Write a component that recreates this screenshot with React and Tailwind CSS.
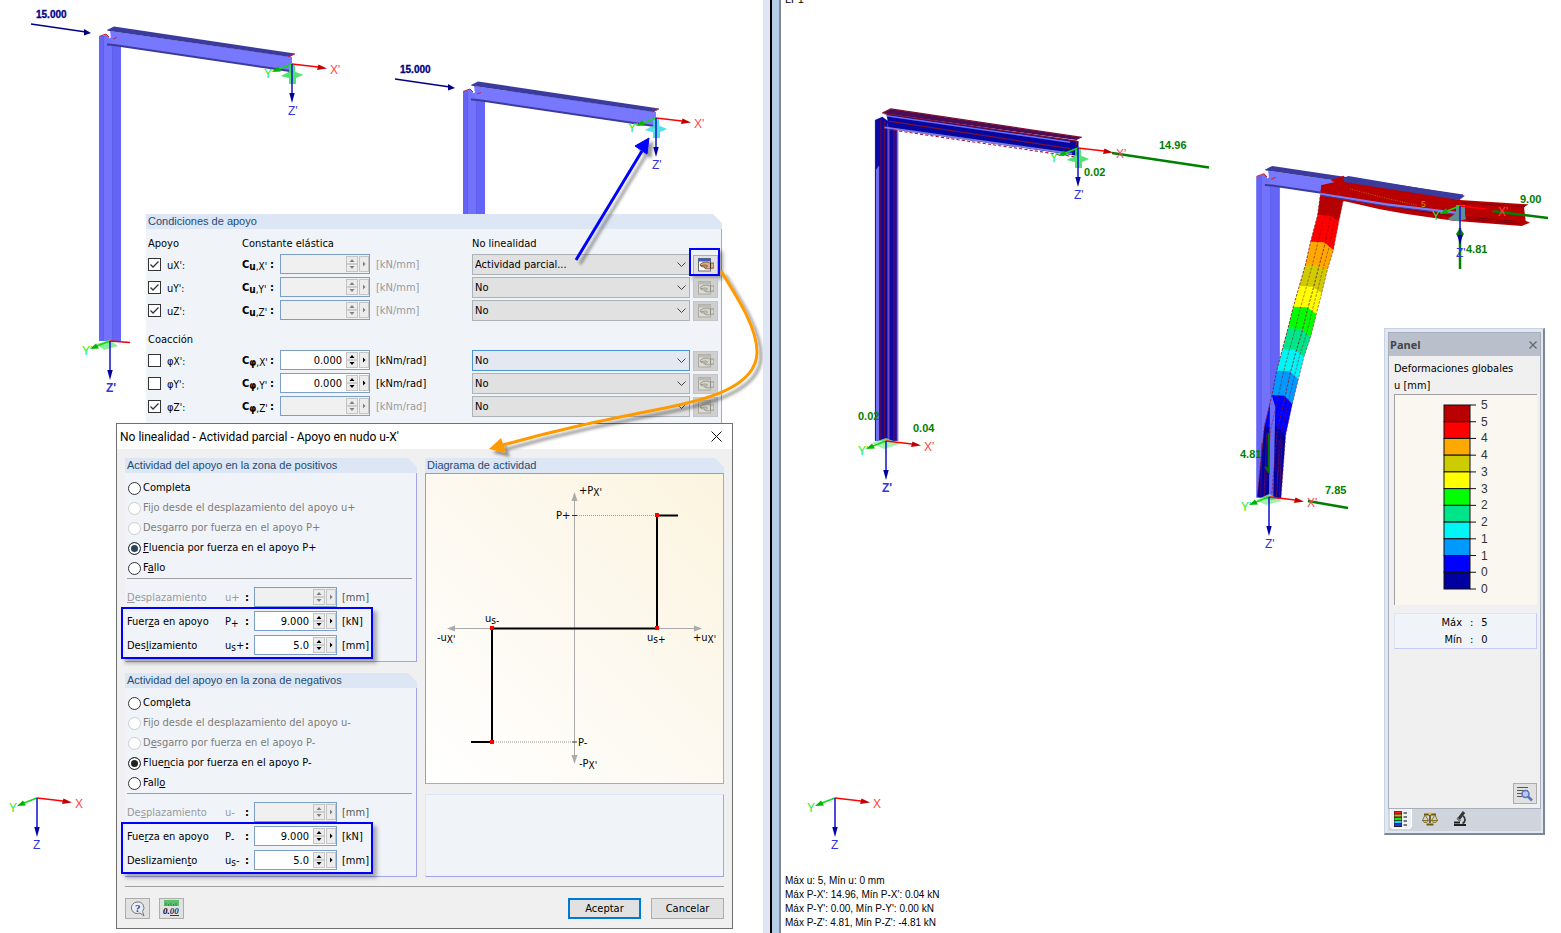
import React from 'react';
import { clsx } from 'clsx';

const NAVY = '#000080';

const supportRows = [
  { id: 'ux', sym: 'u', axis: "X'", checked: true, unit: '[kN/mm]', value: '', option: 'Actividad parcial...' },
  { id: 'uy', sym: 'u', axis: "Y'", checked: true, unit: '[kN/mm]', value: '', option: 'No' },
  { id: 'uz', sym: 'u', axis: "Z'", checked: true, unit: '[kN/mm]', value: '', option: 'No' },
];

const restraintRows = [
  { id: 'phix', sym: 'φ', axis: "X'", checked: false, unit: '[kNm/rad]', value: '0.000', option: 'No', hot: true },
  { id: 'phiy', sym: 'φ', axis: "Y'", checked: false, unit: '[kNm/rad]', value: '0.000', option: 'No' },
  { id: 'phiz', sym: 'φ', axis: "Z'", checked: true, unit: '[kNm/rad]', value: '', option: 'No' },
];

const zones = [
  {
    id: 'pos',
    title: 'Actividad del apoyo en la zona de positivos',
    sign: '+',
    options: ['Completa', 'Fijo desde el desplazamiento del apoyo u+', 'Des&garro por fuerza en el apoyo P+', '&Fluencia por fuerza en el apoyo P+', 'F&allo'],
    labels: ['&Desplazamiento', 'Fuer&za en apoyo', 'Des&lizamiento'],
    dot: 'checked:bg-[#24465f]',
  },
  {
    id: 'neg',
    title: 'Actividad del apoyo en la zona de negativos',
    sign: '-',
    options: ['Com&pleta', 'Fijo desde el desplazamiento del apoyo u-', 'D&esgarro por fuerza en el apoyo P-', 'Flue&ncia por fuerza en el apoyo P-', 'Fall&o'],
    labels: ['De&splazamiento', 'Fue&rza en apoyo', 'Deslizamien&to'],
    dot: 'checked:bg-[#222222]',
  },
];

const legend = [
  ['#b80000', '5'], ['#ff0000', '5'], ['#ffa800', '4'], ['#cccc00', '4'], ['#ffff00', '3'], ['#00ff00', '3'],
  ['#00e58a', '2'], ['#00f5f5', '2'], ['#0099ff', '1'], ['#0000ff', '1'], ['#0000a0', '0'],
];

// "&" marks the access key letter
function Mnemonic({ text }) {
  const i = text.indexOf('&');
  if (i < 0) return text;
  return <>{text.slice(0, i)}<u>{text[i + 1]}</u>{text.slice(i + 2)}</>;
}

function GroupTitle({ children }) {
  return (
    <h3 className="h-[15px] bg-[#dce6f4] pl-0.5 font-['Liberation_Sans',Arial,sans-serif] text-[11px] leading-[15px] text-[#1f4a73] [clip-path:polygon(0_0,calc(100%-9px)_0,100%_9px,100%_100%,0_100%)]">
      {children}
    </h3>
  );
}

function NumberField({ id, value, disabled, className }) {
  const ink = disabled ? '#808080' : '#000';
  return (
    <div className={clsx('flex h-5 items-stretch border border-[#7b9fc8]', disabled ? 'bg-[#f0f0f0]' : 'bg-white', className)}>
      <input id={id} type="text" defaultValue={value} disabled={disabled} className="min-w-0 flex-1 bg-transparent pr-1 pt-px text-right outline-none" />
      <button type="button" disabled={disabled} aria-label="Cambiar valor" className="my-px w-3 border border-[#c4c4c4] bg-[#ececec]">
        <svg width="10" height="14" viewBox="0 0 10 14">
          <path d="M5 2 L7.500 5 H2.500Z M5 12 L7.500 9 H2.500Z" fill={ink} />
          <path d="M0 7H10" stroke="#b0b0b0" />
        </svg>
      </button>
      <button type="button" disabled={disabled} aria-label="Más opciones" className="my-px ml-px w-[10px] border border-[#c4c4c4] bg-[#ececec]">
        <svg width="8" height="14" viewBox="0 0 8 14">
          <path d="M3 4.500 L5.500 7 L3 9.500Z" fill={ink} />
        </svg>
      </button>
    </div>
  );
}

function HandIcon({ active }) {
  return (
    <svg width="16" height="14" viewBox="0 0 16 14">
      <rect x="0.500" y="0.500" width="12" height="12.500" fill={active ? '#fff' : '#dcdcd6'} stroke={active ? '#666' : '#aaa9a0'} />
      <rect x="0.500" y="0.500" width="12" height="3" fill={active ? '#3a5fc4' : '#bcbcb4'} />
      <path d="M2 6.500 L5 4.500 L9 4 L12 5 L16 5 L16 10 L12.500 10.500 L10 11 L7 10.500 L6 9 L3 8.500Z" fill={active ? '#e2ab80' : '#d4d4ca'} stroke={active ? '#6b4a3a' : '#8f8f86'} strokeWidth="0.800" />
      <path d="M3 7.500 L8 7 L10 8.500 M6 9 L9 9" stroke={active ? '#6b4a3a' : '#8f8f86'} strokeWidth="0.800" fill="none" />
      <path d="M12.500 5 V10.500" stroke={active ? '#333' : '#8f8f86'} />
    </svg>
  );
}

function SupportRow({ row }) {
  const active = row.id === 'ux';
  return (
    <div className="flex h-[23px] items-start">
      <label className="flex h-5 w-[94px] items-center gap-1.5">
        <span className="relative size-[13px]">
          <input type="checkbox" defaultChecked={row.checked} className="peer block size-[13px] appearance-none border border-[#333] bg-white" />
          <svg className="pointer-events-none absolute left-0 top-0 hidden peer-checked:block" width="13" height="13" viewBox="0 0 13 13">
            <path d="M2.500 6.500 L5 9 L10.500 3.500" fill="none" stroke="#333" strokeWidth="1.300" />
          </svg>
        </span>
        <span className="pt-1">{row.sym}<span className="text-[10px]">{row.axis}:</span></span>
      </label>
      <label htmlFor={row.id} className="flex h-5 w-[38px] items-center justify-between pr-1.5 pt-px">
        <span><b>C</b><span className="relative top-0.5 text-[10px]"><b>{row.sym}</b>,{row.axis}</span></span>
        <b>:</b>
      </label>
      <NumberField id={row.id} value={row.value} disabled={!row.value} className="w-[90px]" />
      <span className={clsx('ml-1.5 w-24 pt-px leading-5', !row.value && 'text-[#9a9a9a]')}>{row.unit}</span>
      <div className="relative w-[218px]">
        <select
          aria-label={`No linealidad ${row.sym}${row.axis}`}
          className={clsx('block h-[21px] w-full appearance-none border pl-0.5 outline-none', row.hot ? 'border-[#4a93cf] bg-[#e3e8f1]' : 'border-[#adb2b5] bg-[#e1e1e1]')}
        >
          <option>{row.option}</option>
        </select>
        <svg className="pointer-events-none absolute right-1 top-2" width="9" height="6" viewBox="0 0 9 6">
          <path d="M0.500 0.500 L4.500 4.500 L8.500 0.500" fill="none" stroke="#444" />
        </svg>
      </div>
      <div className="relative ml-[3px]">
        <button type="button" aria-label="Editar no linealidad" disabled={!active} className={clsx('mt-px flex h-5 w-[25px] items-center justify-center border', active ? 'border-[#adadad] bg-[#e1e1e1]' : 'border-[#c4c4c4] bg-[#cfcfcf]')}>
          <HandIcon active={active} />
        </button>
        {active && <div className="pointer-events-none absolute -left-1 -top-1.5 h-7 w-[31px] border-2 border-[#0000ff] shadow-[3px_3px_4px_rgba(0,0,0,0.35)]" />}
      </div>
    </div>
  );
}

function SupportPanel() {
  return (
    <section className="absolute left-[146px] top-[214px] w-[576px]">
      <GroupTitle>Condiciones de apoyo</GroupTitle>
      <div className="h-52 border-r border-[#a3a3ee] bg-[#f0f4f9] pl-0.5">
        <div className="flex h-[25px] pt-[5px] leading-5">
          <span className="w-[94px]">Apoyo</span>
          <span className="w-[230px]">Constante elástica</span>
          <span>No linealidad</span>
        </div>
        {supportRows.map(row => <SupportRow key={row.id} row={row} />)}
        <div className="h-[27px] pt-[7px] leading-5">Coacción</div>
        {restraintRows.map(row => <SupportRow key={row.id} row={row} />)}
      </div>
    </section>
  );
}

function ValueRow({ id, label, symbol, value, unit, disabled, raised }) {
  return (
    <div className="flex h-5 items-center">
      <label htmlFor={id} className={clsx('w-[98px] pt-px', disabled && 'text-[#9a9a9a]')}><Mnemonic text={label} /></label>
      <span className={clsx('w-5 pt-px', disabled && 'text-[#9a9a9a]')}>{symbol}</span>
      <b className="w-[9px] pt-px">:</b>
      <NumberField id={id} value={value} disabled={disabled} className="w-[83px]" />
      <span className={clsx('ml-[5px] pt-px', raised && 'text-[#555]')}>{unit}</span>
    </div>
  );
}

function ZoneGroup({ zone }) {
  const [desp, fuerza, desl] = zone.labels;
  return (
    <section>
      <GroupTitle>{zone.title}</GroupTitle>
      <div className="border-b border-r border-[#a3a3ee] bg-[#f0f4f9] pb-1.5 pl-0.5 pt-[5px]">
        {zone.options.map((text, i) => {
          const disabled = i === 1 || i === 2;
          return (
            <label key={text} className={clsx('flex h-5 items-center gap-0.5 pl-px', disabled && 'text-[#7c7c7c]')}>
              <input
                type="radio"
                name={zone.id}
                defaultChecked={i === 3}
                disabled={disabled}
                className={clsx('size-[13px] appearance-none rounded-full border bg-white checked:shadow-[inset_0_0_0_2px_white]', disabled ? 'border-[#cccccc]' : 'border-[#333]', zone.dot)}
              />
              <span><Mnemonic text={text} /></span>
            </label>
          );
        })}
        <hr className="mr-1 border-[#a0a0a0]" />
        <div className="mt-[7px] flex flex-col gap-1 pt-px">
          <ValueRow id={`${zone.id}-u`} label={desp} symbol={`u${zone.sign}`} value="" unit="[mm]" disabled raised />
          <div className="relative flex flex-col gap-1">
            <ValueRow id={`${zone.id}-p`} label={fuerza} symbol={<>P<span className="relative top-0.5 text-[10px]">{zone.sign}</span></>} value="9.000" unit="[kN]" />
            <ValueRow id={`${zone.id}-us`} label={desl} symbol={<>u<span className="relative top-0.5 text-[10px]">s</span>{zone.sign}</>} value="5.0" unit="[mm]" />
            <div className="pointer-events-none absolute -bottom-1 -left-1.5 -top-1 w-[252px] border-2 border-[#0000ff] shadow-[4px_4px_4px_rgba(0,0,0,0.3)]" />
          </div>
        </div>
      </div>
    </section>
  );
}

function Sub({ children, small = 10 }) {
  return <tspan dy="2" fontSize={small}>{children}</tspan>;
}

function ActivityDiagram() {
  return (
    <svg className="block h-[309px] w-full" viewBox="426 474 297 309">
      <defs>
        <linearGradient id="paper" x1="0" y1="1" x2="1" y2="0">
          <stop offset="0" stopColor="#ffffff" />
          <stop offset="0.500" stopColor="#fdf9f0" />
          <stop offset="1" stopColor="#fbf4de" />
        </linearGradient>
      </defs>
      <rect x="420" y="474" width="310" height="309" fill="url(#paper)" />
      <path d="M574.500 497V759M452 628.500H697" stroke="#aaaaaa" />
      <path d="M574.500 492L577.500 501H571.500Z M574.500 764L577.500 755H571.500Z M447 628.500L455 625.500V631.500Z M702 628.500L694 625.500V631.500Z" fill="#aaaaaa" />
      <path d="M577 515.500H655M494 742H572" stroke="#999" strokeDasharray="1 1" />
      <path d="M572 515.500H577M572 742H577" stroke="#333" />
      <path d="M678 515.500H657V628.500H492V742H471" fill="none" stroke="#000" strokeWidth="2" />
      <g fill="#ff0000">
        <rect x="655" y="513" width="4" height="4" />
        <rect x="655" y="626" width="4" height="4" />
        <rect x="490" y="626" width="4" height="4" />
        <rect x="490" y="740" width="4" height="4" />
      </g>
      <g fontSize="11">
        <text x="579" y="494">+P<Sub>X'</Sub></text>
        <text x="556" y="519">P+</text>
        <text x="578" y="746">P-</text>
        <text x="579" y="767">-P<Sub>X'</Sub></text>
        <text x="485" y="622">u<Sub>s-</Sub></text>
        <text x="437" y="641">-u<Sub>X'</Sub></text>
        <text x="647" y="641">u<Sub>s+</Sub></text>
        <text x="693" y="641">+u<Sub>X'</Sub></text>
      </g>
    </svg>
  );
}

function Dialog() {
  return (
    <section role="dialog" aria-label="No linealidad" className="absolute left-[116px] top-[423px] w-[617px] border border-[#707070] bg-[#f0f0f0]">
      <header className="flex h-[25px] items-center justify-between bg-white pl-[3px] pr-2.5">
        <h2 className="font-['Roboto','Open_Sans',sans-serif] text-[12px]">No linealidad - Actividad parcial - Apoyo en nudo u-X'</h2>
        <button type="button" aria-label="Cerrar">
          <svg width="11" height="11" viewBox="0 0 11 11"><path d="M0.500 0.500L10.500 10.500M10.500 0.500L0.500 10.500" stroke="#111" /></svg>
        </button>
      </header>
      <div className="flex gap-2 px-2 pt-[9px]">
        <div className="flex w-[292px] flex-col gap-[11px]">
          {zones.map(zone => <ZoneGroup key={zone.id} zone={zone} />)}
        </div>
        <div className="flex flex-1 flex-col gap-2.5">
          <section>
            <GroupTitle>Diagrama de actividad</GroupTitle>
            <div className="border border-b-[#a3a3ee] border-l-[#a0a0a0] border-r-[#a3a3ee] border-t-[#a0a0a0]">
              <ActivityDiagram />
            </div>
          </section>
          <div className="flex-1 border border-b-[#a3a3ee] border-l-[#dce6f4] border-r-[#a3a3ee] border-t-[#dce6f4] bg-[#f0f4f9]" />
        </div>
      </div>
      <footer className="mx-2 mt-[9px] flex items-center border-t border-[#a0a0a0] pb-[9px] pt-[11px]">
        <button type="button" aria-label="Ayuda" className="flex h-[21px] w-[25px] items-center justify-center border border-[#adadad] bg-[#e1e1e1]">
          <svg width="16" height="16" viewBox="0 0 16 16">
            <path d="M7 1a6 5.800 0 1 0 3 11l4 3-1.500-4.500A6 5.800 0 0 0 7 1Z" fill="#e8ecf6" stroke="#777" />
            <text x="5" y="11" fontSize="11" fontWeight="bold" fill="#2b4596" fontFamily="Liberation Serif, serif">?</text>
          </svg>
        </button>
        <button type="button" aria-label="Unidades" className="ml-[9px] flex h-[21px] w-[25px] items-center justify-center border border-[#adadad] bg-[#e1e1e1]">
          <svg width="17" height="17" viewBox="0 0 17 17">
            <rect x="1" y="0" width="15" height="6" fill="#5cc06a" />
            <path d="M3 3V6M5.500 4V6M8 3V6M10.500 4V6M13 3V6" stroke="#2d8a3c" />
            <text x="0" y="14" fontSize="9" fontWeight="bold" fontStyle="italic" fontFamily="Liberation Serif, serif">0.<tspan fill="#223a78">00</tspan></text>
            <path d="M7 15.500H16" stroke="#223a78" />
          </svg>
        </button>
        <button type="button" className="ml-auto h-[21px] w-[73px] border-2 border-[#0078d7] bg-[#e1e1e1]">Aceptar</button>
        <button type="button" className="ml-2.5 h-[21px] w-[73px] border border-[#adadad] bg-[#e1e1e1]">Cancelar</button>
      </footer>
    </section>
  );
}

function Axis({ x, y, prime = "'", bold, noX }) {
  return (
    <g transform={`translate(${x} ${y})`} fontSize="12" fontFamily="Liberation Sans, Arial, sans-serif">
      {noX ? <path d="M0 0L20 1.500" stroke="#ee0000" strokeWidth="1.500" /> : (
        <>
          <path d="M0 0L26 3" stroke="#ff0000" strokeWidth="1.500" />
          <path d="M35 4.500L25 6L26.500 0.500Z" fill="#c00000" />
          <text x="38" y="10" fill="#ff4444">X{prime}</text>
        </>
      )}
      <path d="M0 0L-13 5" stroke="#11dd11" strokeWidth="1.800" />
      <path d="M-20 8L-14 2.500L-11 7.500Z" fill="#00b400" />
      <text x="-28" y="14" fill="#22ee22">Y{prime}</text>
      <path d="M0 0V30" stroke="#1010d0" strokeWidth="1.500" />
      <path d="M0 39L-2.700 29H2.700Z" fill="#0000a0" />
      <text x="-4" y="51" fill="#3333dd" fontWeight={bold ? 'bold' : 'normal'}>Z{prime}</text>
    </g>
  );
}

function Support({ x, y, fill }) {
  return (
    <g transform={`translate(${x} ${y})`} fill={fill} opacity="0.850">
      <path d="M-11 12L-3 8V1H3V8L11 11L4 14V20H-3V14Z" />
      <path d="M-11 12L0 6L11 11L0 15Z" opacity="0.600" />
    </g>
  );
}

function Frame({ transform, bottom = 341 }) {
  return (
    <g transform={transform}>
      <path d={`M99 37L106 34L121 45V${bottom}H99Z`} fill="#7272fb" />
      <path d={`M99 37L103 35V${bottom}H99Z M113 40L121 44V${bottom}H113Z`} fill="#6464f6" />
      <path d={`M103.500 36V${bottom}M112.500 42V${bottom}`} stroke="#5a5ae8" strokeWidth="0.800" />
      <path d="M110 31L292 57V71L112 45Z" fill="#7878ff" />
      <path d="M106 30.500L114 26.500L295 53.500L290 57Z" fill="#3b3b9e" />
      <path d="M107 44.500L114 45L290 71" fill="none" stroke="#3b3b9e" strokeWidth="2" />
      <path d="M106 29.500L110 38" stroke="#fff" strokeWidth="1.500" />
      <path d="M99 36.500L106 34L109 37M113 39L117 37.500M288 57L295 54M288 72H292" fill="none" stroke="#d02040" />
    </g>
  );
}

function LoadArrow({ x, y }) {
  return (
    <g transform={`translate(${x} ${y})`}>
      <path d="M0 0L55 8" stroke={NAVY} strokeWidth="1.500" />
      <path d="M60 9L53 5V11.500Z" fill={NAVY} />
      <text x="5" y="-6" fontSize="10" fontWeight="bold" fill={NAVY} stroke={NAVY} strokeWidth="0.300" fontFamily="Liberation Sans, Arial, sans-serif">15.000</text>
    </g>
  );
}

function ModelScene() {
  return (
    <svg className="absolute left-0 top-0" width="763" height="933" viewBox="0 0 763 933">
      <Frame />
      <Frame transform="translate(364 55)" bottom={170} />
      <LoadArrow x={31} y={24} />
      <LoadArrow x={395} y={79} />
      <Support x={292} y={64} fill="#33e05a" />
      <Support x={656} y={118} fill="#33dde6" />
      <path d="M96 344L110 340L118 346L104 350Z" fill="#8cf09a" />
      <Axis x={292} y={64} />
      <Axis x={656} y={118} />
      <Axis x={110} y={341} noX bold />
      <Axis x={37} y={798} prime="" />
    </svg>
  );
}

// left and right ends of the colour bands on the deformed column
const bands = [
  [305, 105, 370, 150], [293, 195, 357, 212], [272, 275, 340, 300], [256, 345, 322, 360], [238, 408, 305, 430], [220, 470, 289, 492],
  [204, 535, 272, 560], [187, 598, 252, 620], [170, 662, 235, 688], [156, 735, 217, 762], [133, 830, 197, 855], [112, 1040, 183, 1045],
];

function bandLine(t) {
  return bands.map(([a, b, c, d]) => `${a + (c - a) * t},${b + (d - b) * t}`).join(' ');
}

function DeformedFrame() {
  return (
    <>
      <Frame transform="translate(1152 138) scale(1.055)" />
      <g transform="translate(1220 150) scale(0.33333)">
        <path d="M340 92L372 80L480 105L720 150L925 163L912 172L917 212L930 218L905 228L700 212L560 192L480 178L368 152Z" fill="#b80000" />
        <path d="M725 158L915 170M480 165L700 198L910 216M720 205L905 222" fill="none" stroke="#7d0010" strokeWidth="3" />
        <path d="M305 105L345 96L372 110L370 155L305 130Z" fill="#b80000" />
        {legend.map(([color], i) => {
          const [a, b, c, d] = bands[i];
          const [e, f, g, h] = bands[i + 1];
          return <path key={color} d={`M${a} ${b}L${a + (c - a) * 0.6} ${b + 2}L${c} ${d}L${g} ${h}L${e + (g - e) * 0.6} ${f + 10}L${e} ${f}Z`} fill={color} />;
        })}
        <path d="M155 735L166 770L160 1040H147L150 735Z" fill="#6d6df5" />
        <path d="M140 850L132 1040M126 880L122 1040M178 870L170 1040M186 870L178 1040" stroke="#5a0a6a" strokeWidth="2.500" />
        {[0, 0.3, 0.6, 0.8, 1].map(t => (
          <polyline key={t} points={bandLine(t)} fill="none" stroke="#8a1020" strokeOpacity="0.800" strokeWidth={t === 0 || t === 0.6 ? 3 : 2} strokeDasharray="8 4" />
        ))}
        <path d="M370 84L385 78L735 137L718 150L372 96Z" fill="#3b3b9e" />
        <path d="M300 128L500 160L718 186L716 194L500 168L300 135Z" fill="#7d7df5" />
        <path d="M302 136L500 168L716 194" fill="none" stroke="#3b3b9e" strokeWidth="3" />
        <path d="M335 92L372 80M345 100V92" stroke="#c00000" strokeWidth="6" />
        <path d="M390 117L500 145L590 166" fill="none" stroke="#b5a000" strokeWidth="2" strokeDasharray="3 4" />
        <text x="603" y="170" fontSize="26" fill="#b5a000" fontFamily="Liberation Sans, Arial, sans-serif">5</text>
        <path d="M682 208L708 190V165H735V192L738 208L712 214Z" fill="#5f8f96" />
        <path d="M146 850V965L136 950" fill="none" stroke="#007000" strokeWidth="6" />
      </g>
    </>
  );
}

function ResultScene() {
  return (
    <svg className="absolute left-0 top-0" width="780" height="933" viewBox="781 0 780 933">
      <g transform="translate(770.500 81) scale(1.055)">
        <path d="M99 37L106 34L121 45V341H99Z" fill="#0a0aa8" />
        <path d="M100 84L103 80V341H100Z M111 40H113V341H111Z M119.500 46H121V341H119.500Z" fill="#6e6ef2" />
        <path d="M99.500 37V341M104.500 36V341M108 38V341M112.500 40V341M116.500 42V341" stroke="#6a0838" strokeWidth="0.900" />
        <path d="M117 44H119.500V341H117Z" fill="#3a0a80" />
        <path d="M110 31L292 57V71L112 45Z" fill="#0606a0" />
        <path d="M110 33L284 58" stroke="#6e6ef2" strokeWidth="1.500" />
        <path d="M108 44L286 69" stroke="#7a7ae0" strokeWidth="1.800" />
        <path d="M106 30.500L114 26.500L295 53.500L290 56Z" fill="#4a0c58" />
        <path d="M106 30.500L114 26.500L295 53.500M108 31L290 57V61M112 38L284 64" fill="none" stroke="#7d1030" strokeWidth="1.200" />
        <path d="M112 46L290 72" stroke="#a01040" strokeDasharray="3 2" />
      </g>
      <DeformedFrame />
      <Support x={1078} y={148} fill="#33e05a" />
      <path d="M872 443L886 438L900 444L884 449Z M1256 500L1269 494L1282 501L1266 505Z" fill="#8cf09a" opacity="0.800" />
      <g stroke="#008000" strokeWidth="2.500">
        <path d="M1112 153L1209 167.500M1492 211L1548 218M1460 228V269M1308 501L1348 508" />
      </g>
      <path d="M1460 228L1464 234L1460 240L1456 234Z" fill="#008000" />
      <Axis x={1078} y={148} />
      <Axis x={886} y={441} bold />
      <Axis x={1460} y={206} />
      <Axis x={1269} y={497} />
      <Axis x={835} y={798} prime="" />
      <g fontSize="11" fontWeight="bold" fill="#008000" fontFamily="Liberation Sans, Arial, sans-serif">
        <text x="1159" y="149">14.96</text>
        <text x="1084" y="176">0.02</text>
        <text x="858" y="420">0.02</text>
        <text x="913" y="432">0.04</text>
        <text x="1240" y="458">4.81</text>
        <text x="1325" y="494">7.85</text>
        <text x="1520" y="203">9.00</text>
        <text x="1466" y="253">4.81</text>
      </g>
    </svg>
  );
}

function Annotations() {
  return (
    <svg className="pointer-events-none absolute left-0 top-0" width="763" height="933" viewBox="0 0 763 933">
      <defs>
        <filter id="soft" x="-20%" y="-20%" width="150%" height="150%">
          <feDropShadow dx="4" dy="4" stdDeviation="1.500" floodColor="#000" floodOpacity="0.400" />
        </filter>
      </defs>
      <g filter="url(#soft)">
        <path d="M576 260L642 151" stroke="#0000ff" strokeWidth="3" />
        <path d="M649 138L635 146L647 154Z" fill="#0000ff" stroke="#0000ff" />
      </g>
      <g filter="url(#soft)">
        <path d="M721 271C738 298 757 328 757 352C757 392 690 403 650 411C600 421 560 429 503 445" fill="none" stroke="#ff9900" strokeWidth="3" />
        <path d="M489 449L501 438L506 453Z" fill="#ff9900" />
      </g>
    </svg>
  );
}

function LegendPanel() {
  const step = 184 / legend.length;
  return (
    <aside className="absolute right-4 top-[328px] w-[161px] border border-b-2 border-r-2 border-[#c8d2e2] border-b-[#7f8794] border-r-[#7f8794] bg-[#dfe7f2] p-[3px] pb-0.5 pr-0.5 font-['DejaVu_Sans_Condensed','DejaVu_Sans',sans-serif]">
      <div className="border border-[#a8aebb] bg-[#f0f0f0]">
        <header className="flex h-[23px] items-center justify-between bg-[#b9bfcb] px-px text-[#444]">
          <h2 className="font-['Open_Sans','Noto_Sans',sans-serif] text-[11px] font-bold">Panel</h2>
          <button type="button" aria-label="Cerrar panel" className="pr-0.5">
            <svg width="8" height="8" viewBox="0 0 8 8"><path d="M0.500 0.500L7.500 7.500M7.500 0.500L0.500 7.500" stroke="#666" strokeWidth="1.200" /></svg>
          </button>
        </header>
        <div className="pb-1 pl-[5px] pr-[3px] pt-1">
          <p className="leading-[17px]">Deformaciones globales</p>
          <p className="leading-[17px]">u [mm]</p>
          <svg className="block w-full border-l border-t border-[#a0a0a0] bg-[#faf7f0]" height="211" viewBox="1395 394 142 210" preserveAspectRatio="xMinYMin meet">
            {legend.map(([color], i) => (
              <rect key={color} x="1444" y={404 + i * step} width="26" height={step} fill={color} stroke="#111" />
            ))}
            {[...legend.map(([, label]) => label), '0'].map((label, i) => (
              <g key={i}>
                <path d={`M1470 ${404 + i * step}H1476`} stroke="#111" />
                <text x="1481" y={408 + i * step} fontSize="12" fill="#333" fontFamily="Liberation Sans, Arial, sans-serif">{label}</text>
              </g>
            ))}
          </svg>
          <dl className="mt-2 grid grid-cols-[67px_auto_1fr] gap-x-2 border border-[#dce6f4] border-b-[#c9c9f5] border-r-[#c9c9f5] bg-[#f0f4f9] text-right leading-[17px]">
            <dt>Máx</dt><dd>:</dd><dd className="text-left">5</dd>
            <dt>Mín</dt><dd>:</dd><dd className="text-left">0</dd>
          </dl>
          <button type="button" aria-label="Buscar" className="ml-auto mt-[134px] flex h-[21px] w-6 items-center justify-center border border-[#adadad] bg-[#e1e1e1]">
            <svg width="18" height="16" viewBox="0 0 18 16">
              <path d="M1 1.500H12M1 4.500H12M1 7.500H6M1 10.500H6" stroke="#555" />
              <circle cx="9.500" cy="8" r="3.500" fill="#b9c8ee" stroke="#5a74b8" strokeWidth="1.500" />
              <path d="M12 10.500L16 14.500" stroke="#5a74b8" strokeWidth="2.500" />
            </svg>
          </button>
        </div>
      </div>
      <nav className="flex h-[22px] items-start bg-[#d0d4dd] pl-0.5">
        <button type="button" aria-label="Escala de colores" className="flex h-5 w-[22px] items-center justify-center rounded-b-sm border border-t-0 border-white bg-[#eef2f4]">
          <svg width="14" height="16" viewBox="0 0 14 16">
            <rect width="8" height="16" fill="#222" />
            <path d="M0.500 1.500H7.500" stroke="#ff2020" strokeWidth="2" />
            <path d="M0.500 4.500H7.500" stroke="#ff9900" strokeWidth="2" />
            <path d="M0.500 8H7.500" stroke="#20e020" strokeWidth="2.500" />
            <path d="M0.500 11H7.500" stroke="#20d0f0" strokeWidth="2" />
            <path d="M0.500 14H7.500" stroke="#2030f0" strokeWidth="2" />
            <path d="M9.500 2H13M9.500 6H13M9.500 10H13M9.500 14H13" stroke="#777" strokeWidth="2" />
          </svg>
        </button>
        <button type="button" aria-label="Factores" className="ml-2 flex h-5 w-5 items-center justify-center">
          <svg width="16" height="16" viewBox="0 0 16 16">
            <path d="M8 2V12M2 3.500H14M4.500 13.500H11.500" stroke="#6b5a1c" strokeWidth="1.800" />
            <path d="M3 4L0.500 9.500H6.500ZM13 4L9.500 9.500H15.500Z" fill="none" stroke="#8a7426" />
            <path d="M0.500 9.500H6.500L5 11.500H2ZM9.500 9.500H15.500L14 11.500H11Z" fill="#d9b83a" stroke="#6b5a1c" strokeWidth="0.600" />
            <circle cx="8" cy="2.500" r="1.500" fill="#e6c84a" />
          </svg>
        </button>
        <button type="button" aria-label="Filtro" className="ml-2.5 flex h-5 w-5 items-center justify-center">
          <svg width="16" height="16" viewBox="0 0 16 16">
            <path d="M12 1L6 9" stroke="#333" strokeWidth="3" />
            <path d="M5 7L8.500 10" stroke="#777" strokeWidth="2" />
            <path d="M11 5C14 7 13.500 11 10.500 12.500" fill="none" stroke="#333" strokeWidth="1.800" />
            <path d="M2 14H14M2 11.500H8" stroke="#222" strokeWidth="2" />
          </svg>
        </button>
      </nav>
    </aside>
  );
}

export default function App() {
  return (
    <main className="flex min-h-screen bg-white font-['DejaVu_Sans_Condensed','DejaVu_Sans',sans-serif] text-[11px] leading-[14px] text-black">
      <div className="relative w-[763px] shrink-0 overflow-hidden">
        <ModelScene />
        <SupportPanel />
        <Dialog />
        <Annotations />
      </div>

      {/* Splitter between the two views */}
      <div className="flex shrink-0">
        <div className="w-[7px] bg-[#dce6f4]" />
        <div className="w-0.5 bg-black" />
        <div className="w-[7px] bg-[#b8cfe8]" />
        <div className="w-0.5 bg-[#808890]" />
      </div>

      <div className="relative flex flex-1 flex-col justify-between overflow-hidden pb-[3px] pl-1 font-['Liberation_Sans',Arial,sans-serif]">
        <ResultScene />
        <p className="-mt-2">LF1</p>
        <div className="text-[10px]">
          <p>Máx u: 5, Mín u: 0 mm</p>
          <p>Máx P-X': 14.96, Mín P-X': 0.04 kN</p>
          <p>Máx P-Y': 0.00, Mín P-Y': 0.00 kN</p>
          <p>Máx P-Z': 4.81, Mín P-Z': -4.81 kN</p>
        </div>
        <LegendPanel />
      </div>
    </main>
  );
}
